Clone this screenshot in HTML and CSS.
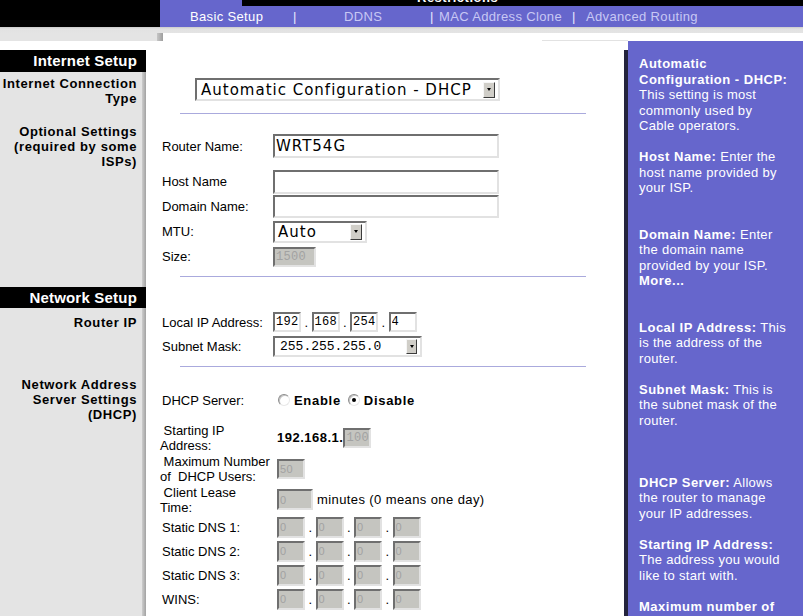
FILE: index.html
```html
<!DOCTYPE html>
<html>
<head>
<meta charset="utf-8">
<title>Basic Setup</title>
<link rel="stylesheet" href="styles.css">
</head>
<body>
<div class="topbar"><div class="toptab"></div><div class="toptext">Restrictions</div></div>
<div class="nav">
  <div class="nav-black"></div>
  <div class="nav-purple">
    <span class="ni n1">Basic Setup</span>
    <span class="ni n2 sep">|</span>
    <span class="ni n3">DDNS</span>
    <span class="ni n4 sep">|</span>
    <span class="ni n5">MAC Address Clone</span>
    <span class="ni n6 sep">|</span>
    <span class="ni n7">Advanced Routing</span>
  </div>
</div>
<div class="shade"></div>
<div class="shade2"><div class="s2-gray"></div><div class="s2-dark"></div><div class="s2-white"></div><div class="s2-line"></div></div>

<div class="page">
  <div class="left">
    <div class="left-top"></div>
    <div class="lhead">Internet Setup</div>
    <div class="lbody lbody1">
      <div class="llabel">Internet Connection<br>Type</div>
      <div class="llabel ll2">Optional Settings<br>(required by some<br>ISPs)</div>
    </div>
    <div class="lhead lhead2">Network Setup</div>
    <div class="lbody lbody2">
      <div class="llabel">Router IP</div>
      <div class="llabel ll4">Network Address<br>Server Settings<br>(DHCP)</div>
    </div>
  </div>

  <div class="main">
    <div class="conn">
      <div class="sel sel-conn"><span>Automatic Configuration - DHCP</span><span class="arrow"></span></div>
    </div>
    <div class="hr hr1"></div>

    <div class="opt">
      <div class="row r24">
        <span class="lbl">Router Name:</span>
        <input class="inp wide h24" type="text" value="WRT54G">
      </div>
      <div class="row r25 host">
        <span class="lbl">Host Name</span>
        <input class="inp wide h24" type="text" value="">
      </div>
      <div class="row r25">
        <span class="lbl">Domain Name:</span>
        <input class="inp wide h23" type="text" value="">
      </div>
      <div class="row r25">
        <span class="lbl">MTU:</span>
        <div class="sel sel-mtu"><span>Auto</span><span class="arrow"></span></div>
      </div>
      <div class="row r25">
        <span class="lbl">Size:</span>
        <input class="inp dis mono size" type="text" value="1500" disabled>
      </div>
    </div>
    <div class="hr hr2"></div>

    <div class="ipblock">
      <div class="row r24">
        <span class="lbl">Local IP Address:</span>
        <input class="inp mono ipo" type="text" value="192"><span class="dot">.</span><input class="inp mono ipo" type="text" value="168"><span class="dot">.</span><input class="inp mono ipo" type="text" value="254"><span class="dot">.</span><input class="inp mono ipo" type="text" value="4">
      </div>
      <div class="row r24">
        <span class="lbl">Subnet Mask:</span>
        <div class="sel sel-mask"><span>255.255.255.0</span><span class="arrow"></span></div>
      </div>
    </div>
    <div class="hr hr3"></div>

    <div class="dhcp">
      <div class="row r24">
        <span class="lbl lbl-radio">DHCP Server:</span>
        <span class="radio"></span><span class="rlabel">Enable</span>
        <span class="radio on"></span><span class="rlabel">Disable</span>
      </div>
      <div class="row r31 start">
        <span class="lbl lbl2 two">&nbsp;Starting IP<br>Address:</span>
        <span class="bold ippre">192.168.1.</span><input class="inp dis mono ipo" type="text" value="100" disabled>
      </div>
      <div class="row r31">
        <span class="lbl lbl2 two">&nbsp;Maximum Number<br>of &nbsp;DHCP Users:</span>
        <input class="inp dis small ipo" type="text" value="50" disabled>
      </div>
      <div class="row r31">
        <span class="lbl lbl2 two">&nbsp;Client Lease<br>Time:</span>
        <input class="inp dis small lease" type="text" value="0" disabled><span class="mins">minutes (0 means one day)</span>
      </div>
      <div class="row r24">
        <span class="lbl lbl3">Static DNS 1:</span>
        <input class="inp dis small ipd" type="text" value="0" disabled><span class="dot">.</span><input class="inp dis small ipd" type="text" value="0" disabled><span class="dot">.</span><input class="inp dis small ipd" type="text" value="0" disabled><span class="dot">.</span><input class="inp dis small ipd" type="text" value="0" disabled>
      </div>
      <div class="row r24">
        <span class="lbl lbl3">Static DNS 2:</span>
        <input class="inp dis small ipd" type="text" value="0" disabled><span class="dot">.</span><input class="inp dis small ipd" type="text" value="0" disabled><span class="dot">.</span><input class="inp dis small ipd" type="text" value="0" disabled><span class="dot">.</span><input class="inp dis small ipd" type="text" value="0" disabled>
      </div>
      <div class="row r24">
        <span class="lbl lbl3">Static DNS 3:</span>
        <input class="inp dis small ipd" type="text" value="0" disabled><span class="dot">.</span><input class="inp dis small ipd" type="text" value="0" disabled><span class="dot">.</span><input class="inp dis small ipd" type="text" value="0" disabled><span class="dot">.</span><input class="inp dis small ipd" type="text" value="0" disabled>
      </div>
      <div class="row r24">
        <span class="lbl lbl3">WINS:</span>
        <input class="inp dis small ipd" type="text" value="0" disabled><span class="dot">.</span><input class="inp dis small ipd" type="text" value="0" disabled><span class="dot">.</span><input class="inp dis small ipd" type="text" value="0" disabled><span class="dot">.</span><input class="inp dis small ipd" type="text" value="0" disabled>
      </div>
    </div>
  </div>

  <div class="right">
    <div class="rstrip"></div>
    <div class="rbody">
      <b>Automatic<br>Configuration - DHCP:</b><br>
      This setting is most<br>
      commonly used by<br>
      Cable operators.<br>
      <br>
      <b>Host Name:</b> Enter the<br>
      host name provided by<br>
      your ISP.<br>
      <br>
      <br>
      <b>Domain Name:</b> Enter<br>
      the domain name<br>
      provided by your ISP.<br>
      <b>More...</b><br>
      <br>
      <br>
      <b>Local IP Address:</b> This<br>
      is the address of the<br>
      router.<br>
      <br>
      <b>Subnet Mask:</b> This is<br>
      the subnet mask of the<br>
      router.<br>
      <br>
      <br>
      <br>
      <b>DHCP Server:</b> Allows<br>
      the router to manage<br>
      your IP addresses.<br>
      <br>
      <b>Starting IP Address:</b><br>
      The address you would<br>
      like to start with.<br>
      <br>
      <b>Maximum number of</b>
    </div>
  </div>
</div>
</body>
</html>
```

FILE: styles.css
```css
* { box-sizing: border-box; }
html, body { margin: 0; padding: 0; }
body {
  width: 803px;
  height: 616px;
  overflow: hidden;
  background: #fff;
  font-family: "Liberation Sans", Arial, sans-serif;
  font-size: 13px;
  color: #000;
}

/* top tab strip */
.topbar { height: 6px; background: #000; display: flex; overflow: hidden; }
.toptab { width: 82px; margin-left: 160px; background: #6666cc; flex: none; }
.toptext {
  margin-left: 175px; margin-top: -9px; align-self: flex-start;
  font-weight: bold; font-size: 13px; line-height: 13px; color: #fff;
  letter-spacing: 0.5px; white-space: nowrap;
}

/* sub navigation */
.nav { height: 21px; display: flex; }
.nav-black { width: 160px; background: #000; flex: none; }
.nav-purple {
  flex: 1; background: #6666cc; display: flex; align-items: center;
  padding-left: 30px; color: #c8c8f4; letter-spacing: 0.35px; white-space: nowrap;
}
.ni { flex: none; display: block; line-height: 15px; }
.n1 { width: 103px; color: #fff; }
.n2 { width: 51px; }
.n3 { width: 86px; }
.n4 { width: 9px; }
.n5 { width: 133px; }
.n6 { width: 14px; }
.sep { color: #ececff; }

.shade { height: 6px; background: linear-gradient(#cbcbcb, #e2e2e2 2px, #e4e4e4); }
.shade2 { height: 8px; display: flex; }
.s2-gray { width: 157px; background: #e4e4e4; flex: none; }
.s2-dark { width: 6px; background: linear-gradient(to right, #c6c6c6, #9e9e9e); flex: none; }
.s2-white { width: 379px; flex: none; }
.s2-line { width: 86px; flex: none; border-bottom: 1px solid #e2e2e2; }

/* page */
.page { display: flex; height: 575px; }

.left { width: 146px; flex: none; display: flex; flex-direction: column; }
.left-top { height: 9px; background: #fff; flex: none; }
.lhead {
  height: 22px; flex: none; background: #000; color: #fff;
  font-weight: bold; font-size: 15px; line-height: 22px;
  text-align: right; padding-right: 9px; letter-spacing: 0.2px; white-space: nowrap;
}
.lhead2 { height: 21px; line-height: 21px; }
.lbody {
  background: linear-gradient(to right, #e4e4e4 0, #e4e4e4 142px, #cdcdcd 142px, #a2a2a2 146px);
  text-align: right; padding-right: 9px;
  font-weight: bold; letter-spacing: 0.6px; line-height: 15px; white-space: nowrap;
}
.lbody1 { height: 215px; flex: none; padding-top: 4px; }
.lbody2 { flex: 1; padding-top: 7px; }
.ll2 { margin-top: 18px; }
.ll4 { margin-top: 47px; }

/* main form */
.main { width: 478px; flex: none; background: #fff; }
.conn { padding: 37px 0 0 49px; }
.hr { height: 1px; background: #aaaadd; margin-left: 34px; width: 406px; }
.hr1 { margin-top: 12px; }
.hr2 { margin-top: 7px; }
.hr3 { margin-top: 8px; }
.opt { margin-top: 20px; }
.ipblock { margin-top: 33px; }
.dhcp { margin-top: 21px; }

.row { display: flex; align-items: center; white-space: nowrap; }
.r24 { height: 24px; }
.r25 { height: 25px; }
.r31 { height: 31px; }
.host { margin-top: 11px; }
.start { margin-top: 10px; }

.lbl { flex: none; display: block; padding-left: 16px; width: 127px; line-height: 15px; }
.lbl-radio { width: 132px; }
.lbl2 { padding-left: 14px; width: 131px; }
.lbl3 { width: 131px; }

.bold { font-weight: bold; letter-spacing: 0.5px; }

/* controls */
.sel {
  display: flex; align-items: center; justify-content: space-between; flex: none;
  border: 2px solid; border-color: #6f6f6f #e2e2e2 #e2e2e2 #6f6f6f;
  background: #fff; white-space: nowrap;
}
.sel-conn {
  width: 305px; height: 23px; padding: 0 3px 0 4px;
  font-family: "DejaVu Sans", sans-serif; font-size: 15px; letter-spacing: 1px;
}
.sel-mtu {
  width: 94px; height: 22px; padding: 0 3px 0 3px;
  font-family: "DejaVu Sans", sans-serif; font-size: 15px; letter-spacing: 1px;
}
.sel-mask {
  width: 149px; height: 21px; padding: 0 3px 0 5px;
  font-family: "Liberation Mono", monospace; font-size: 13px;
}
.arrow {
  flex: none; width: 12px; height: 16px; background: #d0cec8;
  border: 1px solid; border-color: #f6f6f6 #3c3c3c #3c3c3c #f6f6f6;
  display: flex; align-items: center; justify-content: center;
}
.sel-mask .arrow { width: 11px; height: 15px; }
.arrow::after {
  content: ""; width: 0; height: 0;
  border-left: 2.5px solid transparent; border-right: 2.5px solid transparent;
  border-top: 3px solid #000;
}

.inp {
  display: block; flex: none; margin: 0; outline: none;
  border: 2px solid; border-color: #6f6f6f #e2e2e2 #e2e2e2 #6f6f6f;
  background: #fff; color: #000; padding: 0 0 0 1px;
  font-family: "DejaVu Sans", sans-serif; font-size: 15px; letter-spacing: 1px;
}
.wide { width: 226px; }
.h24 { height: 24px; }
.h23 { height: 23px; }
.mono { font-family: "Liberation Mono", monospace; font-size: 12px; letter-spacing: 0.3px; }
.small { font-family: "Liberation Sans", sans-serif; font-size: 11px; letter-spacing: 0.3px; }
.dis { background: #c5c5c0; color: #a2a2a2; -webkit-text-fill-color: #a2a2a2; opacity: 1; }
.size { width: 43px; height: 20px; }
.ipo { width: 28px; height: 20px; }
.ipd { width: 28px; height: 21px; }
.lease { width: 36px; height: 21px; }
.ippre { display: block; flex: none; }
.dot { display: block; flex: none; width: 10.5px; text-align: center; }
.mins { margin-left: 4px; letter-spacing: 0.4px; }

.radio {
  flex: none; display: block; width: 12px; height: 12px; border-radius: 50%;
  border: 1px solid; border-color: #8c8c8c #e8e8e8 #e8e8e8 #8c8c8c;
  background: #fff; box-shadow: inset 1px 1px 0 #c4c4c4;
  margin-right: 4px;
  display: flex; align-items: center; justify-content: center;
}
.radio.on::after { content: ""; width: 4px; height: 4px; border-radius: 50%; background: #000; }
.rlabel { font-weight: bold; letter-spacing: 0.7px; margin-right: 7px; }

/* help column */
.right { flex: 1; display: flex; background: #fff; }
.rstrip { width: 4px; margin-top: 9px; background: #23233d; flex: none; }
.rbody {
  flex: 1; background: #6666cc; color: #fff;
  padding: 15.25px 0 0 11px; line-height: 15.5px; letter-spacing: 0.3px; white-space: nowrap;
}
.rbody b { letter-spacing: 0.5px; }
```
